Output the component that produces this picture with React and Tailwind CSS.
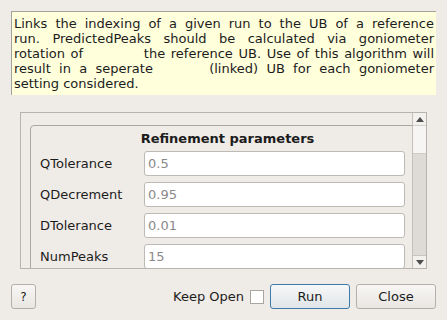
import React from "react";

const rows = [
  { label: "QTolerance", value: "0.5" },
  { label: "QDecrement", value: "0.95" },
  { label: "DTolerance", value: "0.01" },
  { label: "NumPeaks", value: "15" },
];

const Line = ({ children, justify = true }) => (
  <div className={justify ? "text-justify [text-align-last:justify] whitespace-nowrap" : "whitespace-nowrap"}>
    {children}
  </div>
);

export default function App() {
  return (
    <div className="w-[447px] h-[320px] overflow-hidden bg-[#efebe7] flex flex-col font-['DejaVu_Sans',sans-serif] text-[13px] text-[#1c1c1c]">
      {/* description */}
      <div className="ml-[11px] mt-[11px] w-[425px] h-[84px] shrink-0 bg-[#ffffdc] border-t border-l border-[#a3a19c] pl-[2px] pr-[2px] pt-[4px] leading-[15px]">
        <Line>Links the indexing of a given run to the UB of a reference</Line>
        <Line>run. PredictedPeaks should be calculated via goniometer</Line>
        <Line>
          rotation of<span className="inline-block w-[55px]"></span> the reference UB. Use of this algorithm will
        </Line>
        <Line>
          result in a seperate<span className="inline-block w-[48px]"></span> (linked) UB for each goniometer
        </Line>
        <Line justify={false}>setting considered.</Line>
      </div>

      {/* properties panel */}
      <div className="ml-[20px] mt-[17px] w-[407px] h-[157px] shrink-0 border border-[#b7b4af] flex">
        <div className="flex-1 overflow-hidden pl-[9px] pt-[12px]">
          <div className="w-[406px] h-[200px] border border-[#aaa7a2] rounded-[4px] pl-[9px] pr-[30px]">
            <div className="text-center font-bold leading-[15px] pt-[5px] pb-[5px] pl-[10px]">Refinement parameters</div>
            <div className="flex flex-col gap-[6px]">
              {rows.map((r) => (
                <div key={r.label} className="flex items-center h-[25px]">
                  <div className="w-[104px]">{r.label}</div>
                  <div className="flex-1 h-[25px] bg-white border border-[#bdbab5] rounded-[3px] flex items-center pl-[3px] text-[#8a8a8a]">
                    {r.value}
                  </div>
                </div>
              ))}
            </div>
          </div>
        </div>
        {/* scrollbar */}
        <div className="w-[14px] border-l border-[#c4c1bc] flex flex-col bg-[#dedbd6]">
          <div className="h-[13px] bg-[#f3f1ee] flex items-center justify-center border-b border-[#d4d1cc]">
            <svg width="8" height="5" viewBox="0 0 8 5"><path d="M0 5 L4 0 L8 5 Z" fill="#4d4d4d" /></svg>
          </div>
          <div className="h-[28px] bg-[#f6f5f3] border-b border-[#cfccc7]"></div>
          <div className="flex-1"></div>
          <div className="h-[13px] bg-[#f3f1ee] flex items-center justify-center border-t border-[#c8c5c0]">
            <svg width="8" height="5" viewBox="0 0 8 5"><path d="M0 0 L8 0 L4 5 Z" fill="#4d4d4d" /></svg>
          </div>
        </div>
      </div>

      {/* buttons */}
      <div className="mt-[15px] h-[25px] flex items-center pl-[11px] pr-[11px]">
        <button className="w-[25px] h-[25px] rounded-[3px] border border-[#b3b0ab] bg-gradient-to-b from-[#f7f6f4] to-[#e9e6e2] text-[12px] leading-none">
          ?
        </button>
        <div className="flex-1"></div>
        <span className="mr-[6px]">Keep Open</span>
        <span className="w-[14px] h-[14px] bg-white border border-[#a9a6a1] mr-[6px]"></span>
        <button className="w-[80px] h-[25px] rounded-[3px] border border-[#3c7aac] bg-gradient-to-b from-[#f6f7f8] to-[#e1e5e8] mr-[6px]">
          Run
        </button>
        <button className="w-[80px] h-[25px] rounded-[3px] border border-[#b3b0ab] bg-gradient-to-b from-[#f7f6f4] to-[#e9e6e2]">
          Close
        </button>
      </div>
    </div>
  );
}
